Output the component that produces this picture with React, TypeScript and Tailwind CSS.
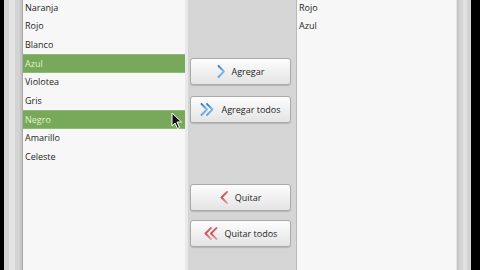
import React from "react";

const leftItems = ["Naranja", "Rojo", "Blanco", "Azul", "Violotea", "Gris", "Negro", "Amarillo", "Celeste"];
const selected = new Set(["Azul", "Negro"]);

function Chevron({ dir, double, color }: { dir: "r" | "l"; double?: boolean; color: "blue" | "red" }) {
  const c1 = color === "blue" ? "#2a7fd4" : "#b8333a";
  const c2 = color === "blue" ? "#9ccaf0" : "#e9a2a6";
  const id = `g-${color}-${dir}-${double ? 2 : 1}`;
  const w = double ? 15 : 9;
  const single = (ox: number) =>
    dir === "r"
      ? `M${ox + 1.5} 1 L${ox + 7} 6.5 L${ox + 1.5} 12`
      : `M${ox + 7} 1 L${ox + 1.5} 6.5 L${ox + 7} 12`;
  return (
    <svg width={w} height={13} viewBox={`0 0 ${w} 13`} className="shrink-0">
      <defs>
        <linearGradient id={id} x1="0" y1="0" x2="1" y2="1">
          <stop offset="0" stopColor={c1} />
          <stop offset="1" stopColor={c2} />
        </linearGradient>
      </defs>
      <path d={single(0)} fill="none" stroke={`url(#${id})`} strokeWidth={1.8} strokeLinecap="round" strokeLinejoin="round" />
      {double && <path d={single(5.5)} fill="none" stroke={`url(#${id})`} strokeWidth={1.8} strokeLinecap="round" strokeLinejoin="round" />}
    </svg>
  );
}

function Btn({ label, dir, double, color, className }: { label: string; dir: "r" | "l"; double?: boolean; color: "blue" | "red"; className?: string }) {
  return (
    <div
      className={`h-[27px] w-[101px] rounded-[3px] border border-[#aaaaaa] bg-gradient-to-b from-[#fdfdfd] to-[#e4e4e4] shadow-[0_1px_1px_rgba(0,0,0,0.15)] flex items-center justify-center gap-[6px] text-[9px] text-[#1e1e1e] ${className ?? ""}`}
    >
      <Chevron dir={dir} double={double} color={color} />
      <span>{label}</span>
    </div>
  );
}

export default function App() {
  return (
    <div
      className="w-[480px] h-[270px] flex bg-black overflow-hidden relative"
      style={{ fontFamily: '"Open Sans", "Noto Sans", sans-serif' }}
    >
      <div className="w-[4px] h-full bg-black" />
      <div className="w-[18px] h-full bg-[#d3d3d3] flex">
        <div className="w-[5px]" />
        <div className="w-[6px] bg-[#e3e3e3]" />
        <div className="w-[5px]" />
        <div className="w-[2px] bg-[#c4c4c4]" />
      </div>
      {/* Left list */}
      <div className="w-[163px] h-full bg-[#f7f7f7] border-l border-[#a9a9a9] flex flex-col pt-0">
        <div className="mt-[-2px]">
          {leftItems.map((it) => (
            <div
              key={it}
              className={`h-[18.67px] flex items-center pl-[2px] text-[9px] ${
                selected.has(it)
                  ? "bg-[#78a85a] text-[#dff5c8] border-y border-[#8fb977]"
                  : "text-[#1e1e1e]"
              }`}
            >
              {it}
            </div>
          ))}
        </div>
      </div>
      {/* Middle */}
      <div className="w-[111px] h-full bg-[#d5d5d5] border-l-[3px] border-[#e9e9e9] flex flex-col items-start pl-[2px]">
        <Btn className="mt-[58px]" label="Agregar" dir="r" color="blue" />
        <Btn className="mt-[11px]" label="Agregar todos" dir="r" double color="blue" />
        <Btn className="mt-[61px]" label="Quitar" dir="l" color="red" />
        <Btn className="mt-[9px]" label="Quitar todos" dir="l" double color="red" />
      </div>
      {/* Right list */}
      <div className="w-[161px] h-full bg-[#f7f7f7] border-l border-[#b9b9b9] border-r border-r-[#e3e3e3] flex flex-col">
        <div className="mt-[-2px]">
          {["Rojo", "Azul"].map((it) => (
            <div key={it} className="h-[18.67px] flex items-center pl-[2px] text-[9px] text-[#1e1e1e]">
              {it}
            </div>
          ))}
        </div>
      </div>
      <div className="w-[14px] h-full bg-[#d3d3d3] flex">
        <div className="w-[2px] bg-[#c6c6c6]" />
        <div className="w-[4px]" />
        <div className="w-[4px] bg-[#e2e2e2]" />
        <div className="w-[4px]" />
      </div>
      <div className="flex-1 h-full bg-black" />
      {/* Cursor */}
      <svg className="absolute left-[171px] top-[112px]" width="12" height="18" viewBox="0 0 12 18">
        <path d="M1 1 L1 14 L4 11 L6.5 16.5 L8.5 15.5 L6 10 L10.5 10 Z" fill="#111" stroke="#fff" strokeWidth="1" strokeLinejoin="round" />
      </svg>
    </div>
  );
}
